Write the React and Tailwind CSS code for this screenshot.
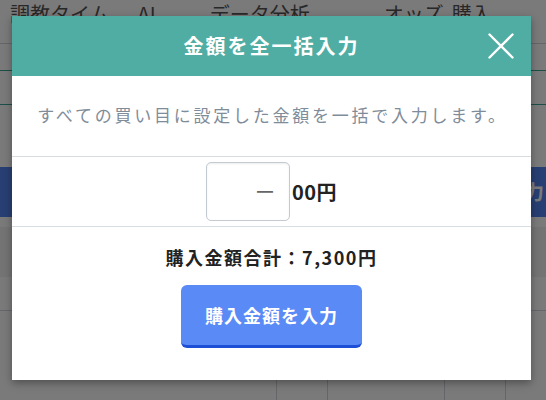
const font = { fontFamily: '"Noto Sans CJK JP", "Noto Sans", sans-serif' };

function BackgroundPage() {
  return (
    <div className="flex h-[400px] w-[546px] flex-col overflow-hidden bg-white">
      <div className="flex h-[44px] items-start border-b border-gray-300 px-[10px] pt-[2px] text-[20px] leading-[24px] text-[#555]">
        <span>調教タイム</span>
        <span className="ml-[28px]">AI</span>
        <span className="ml-[54px]">データ分析</span>
        <span className="ml-[74px]">オッズ</span>
        <span className="ml-[8px]">購入</span>
      </div>
      <div className="h-[26px]" />
      <div className="h-[35px] border-t border-b border-[#3aa596]" />
      <div className="h-[62px]" />
      <div className="flex h-[50px] items-center justify-end bg-[#5585f0] pr-[2px] text-[20px] font-bold text-white">
        入力
      </div>
      <div className="h-[10px]" />
      <div className="h-[50px] bg-[#f3f3f3]" />
      <div className="h-[34px] border-b border-gray-300" />
      <div className="flex flex-1">
        <div className="w-[277px] border-r border-gray-300" />
        <div className="w-[51px] border-r border-gray-300" />
        <div className="w-[117px] border-r border-gray-300" />
        <div className="w-[61px] border-r border-gray-300" />
      </div>
    </div>
  );
}

export default function App() {
  return (
    <div className="relative h-[400px] w-[546px] overflow-hidden" style={font}>
      <BackgroundPage />
      <div className="absolute inset-0 bg-black/[0.52]" />

      <div className="absolute left-[12px] top-[16px] flex h-[364px] w-[519px] flex-col bg-white shadow-[0_3px_8px_rgba(0,0,0,0.35)]">
        <div className="relative flex h-[60px] items-center justify-center bg-[#50ada3]">
          <h2 className="text-[20px] font-bold tracking-[2px] text-white">金額を全一括入力</h2>
          <button className="absolute left-[476px] top-[17px]">
            {/* close icon */}
            <svg width="26" height="26" viewBox="0 0 26 26" fill="none" stroke="white" strokeWidth="2.4" strokeLinecap="round">
              <line x1="1.5" y1="1.5" x2="24.5" y2="24.5" />
              <line x1="24.5" y1="1.5" x2="1.5" y2="24.5" />
            </svg>
          </button>
        </div>

        <div className="flex h-[81px] items-center justify-center border-b border-[#d8dde2]">
          <p className="pb-[2px] pl-[2px] text-[17px] tracking-[2.75px] text-[#7f8c9a]">
            すべての買い目に設定した金額を一括で入力します。
          </p>
        </div>

        <div className="flex h-[70px] items-center justify-center border-b border-[#d8dde2]">
          <div className="flex h-[59px] w-[84px] items-center justify-end rounded-[5px] border border-[#c3cad1] pr-[14px] text-[20px] text-[#666] shadow-[inset_0_1px_2px_rgba(0,0,0,0.08)]">
            ー
          </div>
          <span className="ml-[2px] text-[20px] font-bold tracking-[0.5px] text-[#222]">00円</span>
        </div>

        <div className="flex flex-1 flex-col items-center pt-[17px]">
          <p className="text-[18px] font-bold tracking-[1.5px] text-[#222]">購入金額合計：7,300円</p>
          <button className="mt-[14px] flex h-[63px] w-[181px] items-center justify-center rounded-[6px] border-b-[3px] border-[#1d4fd6] bg-[#5a8af5] text-[18px] font-bold tracking-[1px] text-white">
            購入金額を入力
          </button>
        </div>
      </div>
    </div>
  );
}
